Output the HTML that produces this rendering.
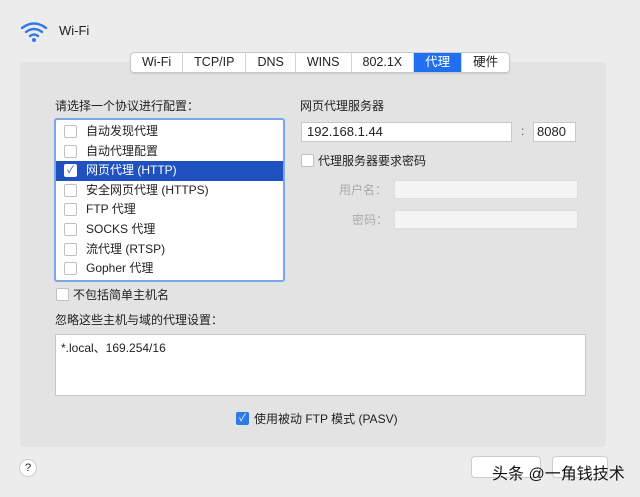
<!DOCTYPE html>
<html><head><meta charset="utf-8"><style>
*{margin:0;padding:0;box-sizing:border-box}
body{width:640px;height:497px;background:#ececec;font-family:"Liberation Sans","Noto Sans CJK SC",sans-serif;font-size:12px;color:#222;position:relative;overflow:hidden}
.a{position:absolute}
.panel{left:20px;top:62px;width:586px;height:385px;background:#e3e3e3;border-radius:4px}
.tabs{left:130px;top:52px;height:21px;display:flex;background:#fff;border:1px solid #c8c8c8;border-radius:4px;overflow:hidden;box-shadow:0 1px 1px rgba(0,0,0,.1)}
.tabs div{padding:0 11px;line-height:19px;font-size:12.5px;border-right:1px solid #d4d4d4}
.tabs .s{background:#1f6ff0;color:#fff}
.list{left:54px;top:118px;width:231px;height:164px;background:#fff;border:2px solid #7aa7ec;border-radius:3px}
.row{position:absolute;left:0;width:227px;height:19.6px;line-height:19.6px;padding-left:30px;font-size:12px}
.row.sel{background:#1f52c0;color:#fff}
.cb{position:absolute;width:13px;height:13px;border:1px solid #c0c0c0;border-radius:2px;background:#fff}
.row .cb{left:8px;top:3px}
.in{position:absolute;background:#fff;border:1px solid #c8c8c8}
.dis{background:#f4f4f4;border-color:#dedede}
</style></head><body>
<svg class="a" style="left:20px;top:20px" width="30" height="24" viewBox="0 0 30 24"><g fill="none" stroke="#2f7ae5" stroke-width="2.4" stroke-linecap="round"><path d="M2 8 Q14 -1 26 8"/><path d="M6 12 Q14 6 22 12"/><path d="M10 16 Q14 13 18 16"/></g><circle cx="14" cy="20" r="2" fill="#2f7ae5"/></svg>
<div class="a" style="left:59px;top:23px;font-size:13px">Wi-Fi</div>
<div class="a panel"></div>
<div class="a tabs"><div>Wi-Fi</div><div>TCP/IP</div><div>DNS</div><div>WINS</div><div>802.1X</div><div class="s">代理</div><div style="border:none">硬件</div></div>
<div class="a" style="left:55px;top:97px">请选择一个协议进行配置：</div>
<div class="a list">
<div class="row" style="top:2px"><span class="cb"></span>自动发现代理</div>
<div class="row" style="top:21.6px"><span class="cb"></span>自动代理配置</div>
<div class="row sel" style="top:41.2px"><span class="cb" style="background:#fff;border-color:#fff;color:#1f52c0;font-size:10px;line-height:11px;text-align:center">✓</span>网页代理 (HTTP)</div>
<div class="row" style="top:60.8px"><span class="cb"></span>安全网页代理 (HTTPS)</div>
<div class="row" style="top:80.4px"><span class="cb"></span>FTP 代理</div>
<div class="row" style="top:100px"><span class="cb"></span>SOCKS 代理</div>
<div class="row" style="top:119.6px"><span class="cb"></span>流代理 (RTSP)</div>
<div class="row" style="top:139.2px"><span class="cb"></span>Gopher 代理</div>
</div>
<span class="cb" style="left:56px;top:288px"></span>
<div class="a" style="left:73px;top:286px">不包括简单主机名</div>
<div class="a" style="left:300px;top:97px">网页代理服务器</div>
<div class="in" style="left:301px;top:122px;width:211px;height:20px;padding-left:5px;line-height:18px;font-size:13px">192.168.1.44</div>
<div class="a" style="left:521px;top:124px;color:#555">:</div>
<div class="in" style="left:533px;top:122px;width:43px;height:20px;padding-left:3px;line-height:18px;font-size:13px">8080</div>
<span class="cb" style="left:301px;top:154px"></span>
<div class="a" style="left:318px;top:152px">代理服务器要求密码</div>
<div class="a" style="left:339px;top:181px;color:#aaa">用户名：</div>
<div class="in dis" style="left:394px;top:180px;width:184px;height:19px"></div>
<div class="a" style="left:352px;top:211px;color:#aaa">密码：</div>
<div class="in dis" style="left:394px;top:210px;width:184px;height:19px"></div>
<div class="a" style="left:55px;top:311px">忽略这些主机与域的代理设置：</div>
<div class="in" style="left:55px;top:334px;width:531px;height:62px;padding:4px 5px;font-size:12px">*.local、169.254/16</div>
<span class="cb" style="left:236px;top:412px;background:#2f7ae5;border-color:#2f7ae5;color:#fff;font-size:10px;line-height:11px;text-align:center">✓</span>
<div class="a" style="left:254px;top:410px">使用被动 FTP 模式 (PASV)</div>
<div class="a" style="left:19px;top:459px;width:18px;height:18px;border-radius:50%;background:#fff;border:1px solid #ccc;text-align:center;line-height:16px;font-size:11px">?</div>
<div class="a" style="left:471px;top:456px;width:70px;height:22px;background:#fff;border:1px solid #ccc;border-radius:4px"></div>
<div class="a" style="left:552px;top:456px;width:56px;height:22px;background:#fff;border:1px solid #ccc;border-radius:4px"></div>
<div class="a" style="left:492px;top:460px;font-size:16px;color:#111">头条 @一角钱技术</div>
</body></html>
